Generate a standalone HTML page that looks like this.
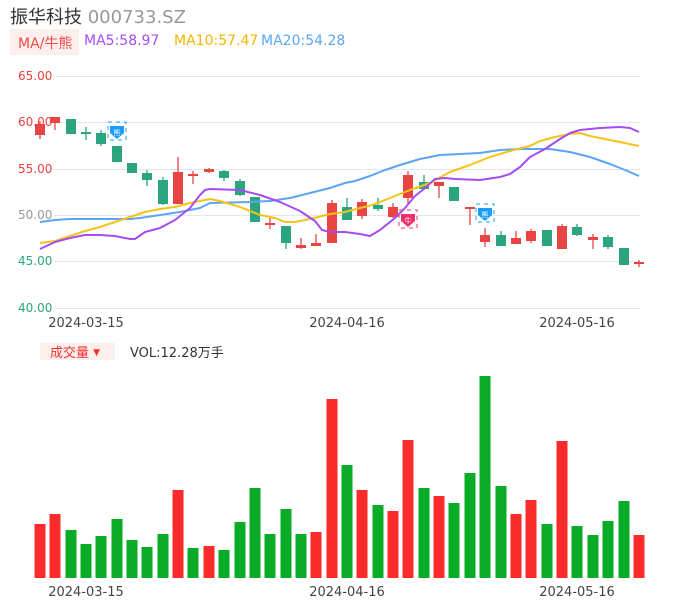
<!DOCTYPE html>
<html><head><meta charset="utf-8">
<style>
html,body{margin:0;padding:0;background:#fff;width:686px;height:606px;overflow:hidden}
body{font-family:"DejaVu Sans","Noto Sans CJK SC",sans-serif;position:relative}
.t{position:absolute;white-space:nowrap}
</style></head><body>
<div class="t" style="left:10px;top:3px;font-size:18px;color:#333">振华科技 <span style="color:#999">000733.SZ</span></div>
<div class="t" style="left:10px;top:29px;width:69px;height:26px;background:#fdf0ec"></div>
<div class="t" style="left:18px;top:33px;font-size:14px;color:#f04848">MA/牛熊</div>
<div class="t" style="left:84px;top:33px;font-size:14px;color:#a64cf5">MA5:58.97</div>
<div class="t" style="left:174px;top:33px;font-size:14px;color:#f5b400">MA10:57.47</div>
<div class="t" style="left:261px;top:33px;font-size:14px;color:#5aa5f5">MA20:54.28</div>
<div class="t" style="left:40px;top:343px;width:75px;height:17px;background:#fdf0ec"></div>
<div class="t" style="left:50px;top:342px;font-size:13px;color:#f03030">成交量 <span style="font-size:9px;vertical-align:2px">▼</span></div>
<div class="t" style="left:130px;top:342px;font-size:13px;color:#333">VOL:12.28万手</div>
<svg id="s" width="686" height="606" style="position:absolute;left:0;top:0" xmlns="http://www.w3.org/2000/svg">
<g stroke="#e2e6f0" stroke-width="1">
<line x1="54" y1="76.5" x2="640" y2="76.5"/><line x1="54" y1="122.5" x2="640" y2="122.5"/>
<line x1="54" y1="169.5" x2="640" y2="169.5"/><line x1="54" y1="215.5" x2="640" y2="215.5"/>
<line x1="54" y1="261.5" x2="640" y2="261.5"/><line x1="54" y1="308.5" x2="640" y2="308.5"/>
</g>
<g font-size="12" font-family="DejaVu Sans, sans-serif">
<text x="18" y="80" fill="#ee4040">65.00</text><text x="18" y="126" fill="#ee4040">60.00</text>
<text x="18" y="173" fill="#ee4040">55.00</text><text x="18" y="219" fill="#999">50.00</text>
<text x="18" y="265" fill="#2aa57f">45.00</text><text x="18" y="312" fill="#2aa57f">40.00</text>
</g>
<g font-size="13" fill="#444" font-family="DejaVu Sans, sans-serif" text-anchor="middle">
<text x="86" y="327">2024-03-15</text><text x="347" y="327">2024-04-16</text><text x="577" y="327">2024-05-16</text>
<text x="86" y="596">2024-03-15</text><text x="347" y="596">2024-04-16</text><text x="577" y="596">2024-05-16</text>
</g>
<g id="c"></g><g id="v"></g>
<g fill="none" stroke-width="2" stroke-linejoin="round">
<polyline stroke="#5aa5f5" points="40,222 55,220 70,219 100,219 130,219 140,218 160,215 180,212 200,208 210,203 250,202 270,201 290,198 310,193 330,188 345,183 355,181 370,176 385,170 400,165 420,159 440,155 460,154 480,153 500,150 520,149 550,149 570,152 590,157 610,164 625,170 639,176"/>
<polyline stroke="#f7c21a" points="40,243 55,241 70,236 85,231 100,227 115,222 130,217 145,212 160,209 175,207 190,203 200,201 210,199 220,201 240,207 260,215 275,218 285,222 295,222 310,219 330,214 345,212 360,208 372,205 385,200 395,196 410,190 430,183 450,172 470,165 490,157 510,151 530,146 540,141 555,137 570,134 580,133 590,136 605,139 620,142 639,146"/>
<polyline stroke="#a64cf5" points="40,249 55,242 70,238 85,235 100,235 115,236 130,239 135,239 145,232 160,228 175,220 190,208 200,195 205,190 210,189 240,190 260,195 280,202 300,211 315,221 322,230 330,232 345,232 360,234 370,236 380,230 395,218 405,208 415,196 425,188 435,179 445,178 455,179 480,180 500,177 510,174 520,167 530,157 545,149 560,139 570,133 580,130 600,128 620,127 630,128 639,132"/>
</g>
<g>
<rect x="108" y="122" width="18" height="18" fill="none" stroke="#1aa0f5" stroke-dasharray="4 4" stroke-width="1"/>
<path d="M110,126 h14 v7 l-7,6 l-7,-6z" fill="#1a9cf8"/><text x="117" y="135" font-size="7" fill="#fff" text-anchor="middle">熊</text>
<rect x="476" y="204" width="18" height="18" fill="none" stroke="#1aa0f5" stroke-dasharray="4 4" stroke-width="1"/>
<path d="M478,208 h14 v7 l-7,6 l-7,-6z" fill="#1a9cf8"/><text x="485" y="217" font-size="7" fill="#fff" text-anchor="middle">熊</text>
<rect x="399" y="210" width="18" height="18" fill="none" stroke="#f0306a" stroke-dasharray="4 4" stroke-width="1"/>
<path d="M401,214 h14 v7 l-7,6 l-7,-6z" fill="#f0306a"/><text x="408" y="223" font-size="7" fill="#fff" text-anchor="middle">牛</text>
</g>
</svg>
<script>
var R="#e84444",G="#2aa57f";
var C=[[40,R,124,135,121,139],[55,R,117,123,117,130],[71,G,119,134,119,134],[86,G,132,134,127,140],[101,G,133,144,130,146],[117,G,146,162,146,162],[132,G,163,173,163,173],[147,G,173,180,170,186],[163,G,180,204,177,205],[178,R,172,204,157,204],[193,R,174,176,171,184],[209,R,169,172,168,173],[224,G,171,178,170,181],[240,G,181,195,179,196],[255,G,197,222,197,222],[270,R,223,225,217,229],[286,G,226,243,226,249],[301,R,245,248,238,249],[316,R,243,246,234,246],[332,R,203,243,200,243],[347,G,207,220,198,220],[362,R,202,216,199,219],[378,G,205,209,198,211],[393,R,207,217,203,218],[408,R,175,198,171,205],[424,G,182,189,175,190],[439,R,182,186,182,198],[454,G,187,201,187,201],[470,R,207,209,207,225],[485,R,235,242,228,247],[501,G,235,246,231,246],[516,R,238,244,231,244],[531,R,231,241,229,243],[547,G,230,246,230,246],[562,R,226,249,224,249],[577,G,227,235,224,236],[593,R,237,240,234,249],[608,G,237,247,235,249],[624,G,248,265,248,265],[639,R,262,264,260,267]];
var V=[[R,524],[R,514],[G,530],[G,544],[G,536],[G,519],[G,540],[G,547],[G,534],[R,490],[G,548],[R,546],[G,550],[G,522],[G,488],[G,534],[G,509],[G,534],[R,532],[R,399],[G,465],[R,490],[G,505],[R,511],[R,440],[G,488],[R,496],[G,503],[G,473],[G,376],[G,486],[R,514],[R,500],[G,524],[R,441],[G,526],[G,535],[G,521],[G,501],[R,535]];
var h="",vh="";
C.forEach(function(c,i){h+='<line x1="'+c[0]+'" x2="'+c[0]+'" y1="'+c[4]+'" y2="'+c[5]+'" stroke="'+c[1]+'" stroke-width="1.3"/>';
h+='<rect x="'+(c[0]-5)+'" y="'+c[2]+'" width="10" height="'+Math.max(2,c[3]-c[2])+'" fill="'+c[1]+'"/>';
var v=V[i];vh+='<rect x="'+(c[0]-5.5)+'" y="'+v[1]+'" width="11" height="'+(578-v[1])+'" fill="'+(v[0]==R?"#fb2b2b":"#0aab26")+'"/>';});
document.getElementById("c").innerHTML=h;document.getElementById("v").innerHTML=vh;
</script>
</body></html>
